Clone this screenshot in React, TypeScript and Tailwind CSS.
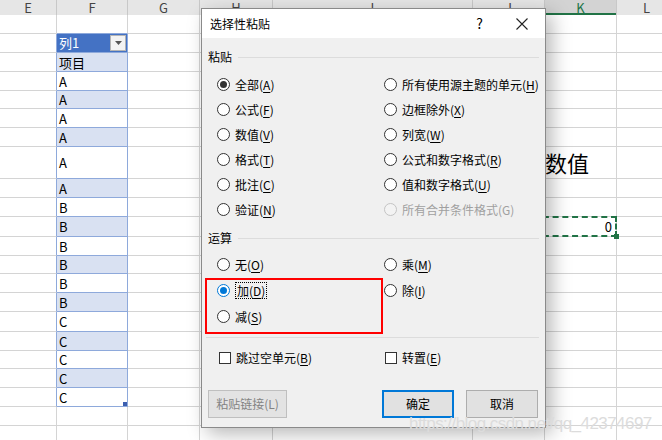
import React from "react";

const columns = [
  { key: "E", w: 57 },
  { key: "F", w: 71 },
  { key: "G", w: 72 },
  { key: "H", w: 73 },
  { key: "I", w: 200 },
  { key: "J", w: 72 },
  { key: "K", w: 72 },
  { key: "L", w: 60 },
];

const rowHeights = [19, 19, 19, 19, 18, 19, 19, 32, 19, 19, 20, 19, 18, 19, 19, 20, 19, 18, 19, 19, 19, 19];

// column F contents, starting at row index 1 (table header)
const tableValues = ["列1", "项目", "A", "A", "A", "A", "A", "A", "B", "B", "B", "B", "B", "B", "C", "C", "C", "C", "C"];

function Sheet() {
  return (
    <div className="flex flex-col">
      <div className="flex h-[15px]">
        {columns.map((c) => (
          <div
            key={c.key}
            style={{ width: c.w }}
            className={
              c.key === "K"
                ? "flex shrink-0 items-center justify-center border-r border-[#c8c8c8] bg-[#d3d3d3] text-[13px] leading-none text-[#217346] shadow-[inset_0_-2px_0_#217346]"
                : "flex shrink-0 items-center justify-center border-r border-[#c8c8c8] bg-[#e6e6e6] text-[13px] leading-none text-[#444]"
            }
          >
            {c.key}
          </div>
        ))}
      </div>
      {rowHeights.map((h, r) => {
        const inTable = r >= 1 && r <= 19;
        const value = inTable ? tableValues[r - 1] : "";
        return (
          <div key={r} className="flex" style={{ height: h }}>
            {columns.map((c) => {
              if (c.key === "E") {
                return (
                  <div
                    key={c.key}
                    style={{ width: c.w }}
                    className={
                      inTable
                        ? "shrink-0 border-r border-b border-r-[#8ea9db] border-b-[#d4d4d4]"
                        : "shrink-0 border-r border-b border-[#d4d4d4]"
                    }
                  />
                );
              }
              if (c.key === "F") {
                if (r === 1) {
                  return (
                    <div
                      key={c.key}
                      style={{ width: c.w }}
                      className="flex shrink-0 items-center justify-between border-r border-b border-[#8ea9db] bg-[#4472c4] pl-[2px] pr-px text-[13px] text-white"
                    >
                      <span>列1</span>
                      <span className="flex h-[16px] w-[16px] items-center justify-center border border-[#b4b4b4] bg-[#f3f3f3]">
                        <svg width="7" height="4" viewBox="0 0 7 4">
                          <path d="M0 0h7L3.5 4z" fill="#555" />
                        </svg>
                      </span>
                    </div>
                  );
                }
                if (inTable) {
                  const blue = r % 2 === 0;
                  return (
                    <div
                      key={c.key}
                      style={{ width: c.w }}
                      className={
                        blue
                          ? "relative flex shrink-0 items-center border-r border-b border-[#8ea9db] bg-[#d9e1f2] pt-px pl-[2px] text-[13px] text-black"
                          : "relative flex shrink-0 items-center border-r border-b border-[#8ea9db] bg-white pt-px pl-[2px] text-[13px] text-black"
                      }
                    >
                      {value}
                      {r === 19 ? (
                        <span className="absolute right-0 bottom-0 h-[4px] w-[4px] bg-[#3c5fb0]" />
                      ) : null}
                    </div>
                  );
                }
                return (
                  <div
                    key={c.key}
                    style={{ width: c.w }}
                    className={
                      r === 0
                        ? "shrink-0 border-r border-b border-r-[#d4d4d4] border-b-[#8ea9db]"
                        : "shrink-0 border-r border-b border-[#d4d4d4]"
                    }
                  />
                );
              }
              if (c.key === "K" && r === 7) {
                return (
                  <div
                    key={c.key}
                    style={{ width: c.w }}
                    className="flex shrink-0 items-center overflow-visible whitespace-nowrap border-r border-b border-[#d4d4d4] text-[22px] text-black"
                  >
                    数值
                  </div>
                );
              }
              if (c.key === "K" && r === 10) {
                return (
                  <div
                    key={c.key}
                    style={{ width: c.w }}
                    className="relative flex shrink-0 items-center justify-end border-r border-b border-[#d4d4d4] pr-[4px] text-[13px] text-black"
                  >
                    0
                    <span className="absolute -top-px -right-px -bottom-px -left-[80px] border-2 border-dashed border-[#217346]" />
                    <span className="absolute -right-[3px] -bottom-[3px] h-[5px] w-[5px] bg-[#217346]" />
                  </div>
                );
              }
              return (
                <div
                  key={c.key}
                  style={{ width: c.w }}
                  className="shrink-0 border-r border-b border-[#d4d4d4]"
                />
              );
            })}
          </div>
        );
      })}
    </div>
  );
}

function Radio({ checked, focused, disabled }: { checked?: boolean; focused?: boolean; disabled?: boolean }) {
  const ring = disabled
    ? "border-[#c4c4c4] bg-[#f3f3f3]"
    : focused
      ? "border-[#0078d7] bg-white"
      : "border-[#333] bg-white";
  return (
    <span className={`flex h-[13px] w-[13px] shrink-0 items-center justify-center rounded-full border ${ring}`}>
      {checked ? (
        <span className={focused ? "h-[7px] w-[7px] rounded-full bg-[#0078d7]" : "h-[7px] w-[7px] rounded-full bg-[#333]"} />
      ) : null}
    </span>
  );
}

function Option({
  label,
  accel,
  checked,
  focused,
  disabled,
}: {
  label: string;
  accel: string;
  checked?: boolean;
  focused?: boolean;
  disabled?: boolean;
}) {
  return (
    <div className="flex items-center gap-[5px]">
      <Radio checked={checked} focused={focused} disabled={disabled} />
      <span
        className={
          focused
            ? "border border-dotted border-black px-px leading-[15px]"
            : disabled
              ? "leading-[15px] text-[#a0a0a0]"
              : "leading-[15px]"
        }
      >
        {label}(
        {disabled ? accel : <span className="underline underline-offset-2">{accel}</span>})
      </span>
    </div>
  );
}

function SectionLabel({ text }: { text: string }) {
  return (
    <div className="flex h-[16px] items-center">
      <span>{text}</span>
      <span className="mr-[6px] ml-[6px] h-px flex-1 bg-[#dcdcdc]" />
    </div>
  );
}

function Checkbox({ label, accel }: { label: string; accel: string }) {
  return (
    <div className="flex items-center gap-[5px]">
      <span className="h-[12px] w-[12px] border border-[#333] bg-white" />
      <span>
        {label}(<span className="underline underline-offset-2">{accel}</span>)
      </span>
    </div>
  );
}

function PasteDialog() {
  return (
    <div className="absolute top-[8px] left-[201px] flex h-[420px] w-[345px] flex-col border border-[#8a8a8a] bg-[#f0f0f0] text-[12px] text-black shadow-[6px_6px_18px_rgba(0,0,0,0.28)]">
      <div className="flex h-[29px] shrink-0 items-center bg-white pl-[8px]">
        <span className="flex-1">选择性粘贴</span>
        <span className="mr-[33px] text-[14px]">?</span>
        <svg className="mr-[17px]" width="12" height="12" viewBox="0 0 12 12">
          <path d="M0.5 0.5l11 11M11.5 0.5l-11 11" stroke="#222" strokeWidth="1.1" />
        </svg>
      </div>
      <div className="flex flex-1 flex-col pt-[11px] pl-[6px]">
        <SectionLabel text="粘贴" />
        <div className="mt-[7px] grid grid-cols-[167px_1fr] auto-rows-[25px] items-center pl-[9px]">
          <Option label="全部" accel="A" checked />
          <Option label="所有使用源主题的单元" accel="H" />
          <Option label="公式" accel="F" />
          <Option label="边框除外" accel="X" />
          <Option label="数值" accel="V" />
          <Option label="列宽" accel="W" />
          <Option label="格式" accel="T" />
          <Option label="公式和数字格式" accel="R" />
          <Option label="批注" accel="C" />
          <Option label="值和数字格式" accel="U" />
          <Option label="验证" accel="N" />
          <Option label="所有合并条件格式" accel="G" disabled />
        </div>
        <div className="mt-[8px]">
          <SectionLabel text="运算" />
        </div>
        <div className="mt-[5px] grid grid-cols-[167px_1fr] auto-rows-[26px] items-center pl-[9px]">
          <Option label="无" accel="O" />
          <Option label="乘" accel="M" />
          <Option label="加" accel="D" checked focused />
          <Option label="除" accel="I" />
          <Option label="减" accel="S" />
          <span />
        </div>
        <div className="mt-[8px] mr-[6px] -ml-[2px] h-px bg-[#dcdcdc]" />
        <div className="mt-[10px] grid h-[20px] grid-cols-[166px_1fr] items-center pl-[11px]">
          <Checkbox label="跳过空单元" accel="B" />
          <Checkbox label="转置" accel="E" />
        </div>
        <div className="mt-[22px] flex h-[28px] items-stretch pr-[7px]">
          <div className="flex w-[79px] items-center justify-center border border-[#bfbfbf] bg-[#e3e3e3] text-[#838383]">
            粘贴链接(L)
          </div>
          <div className="flex-1" />
          <div className="flex w-[72px] items-center justify-center border-2 border-[#0078d7] bg-[#e1e1e1]">
            确定
          </div>
          <div className="ml-[12px] flex w-[72px] items-center justify-center border border-[#adadad] bg-[#e1e1e1]">
            取消
          </div>
        </div>
      </div>
      <div className="pointer-events-none absolute top-[269px] left-[3px] h-[56px] w-[178px] border-2 border-[#ff0000]" />
    </div>
  );
}

export default function App() {
  return (
    <div className="relative h-[440px] w-[662px] overflow-hidden bg-white font-[Noto_Sans_CJK_SC,sans-serif]">
      <Sheet />
      <PasteDialog />
      <div className="pointer-events-none absolute top-[415px] left-[409px] font-[Liberation_Sans,sans-serif] text-[17px] leading-none tracking-[-0.55px] whitespace-nowrap text-[#dcdcdc]">
        https://blog.csdn.net/qq_42374697
      </div>
    </div>
  );
}
